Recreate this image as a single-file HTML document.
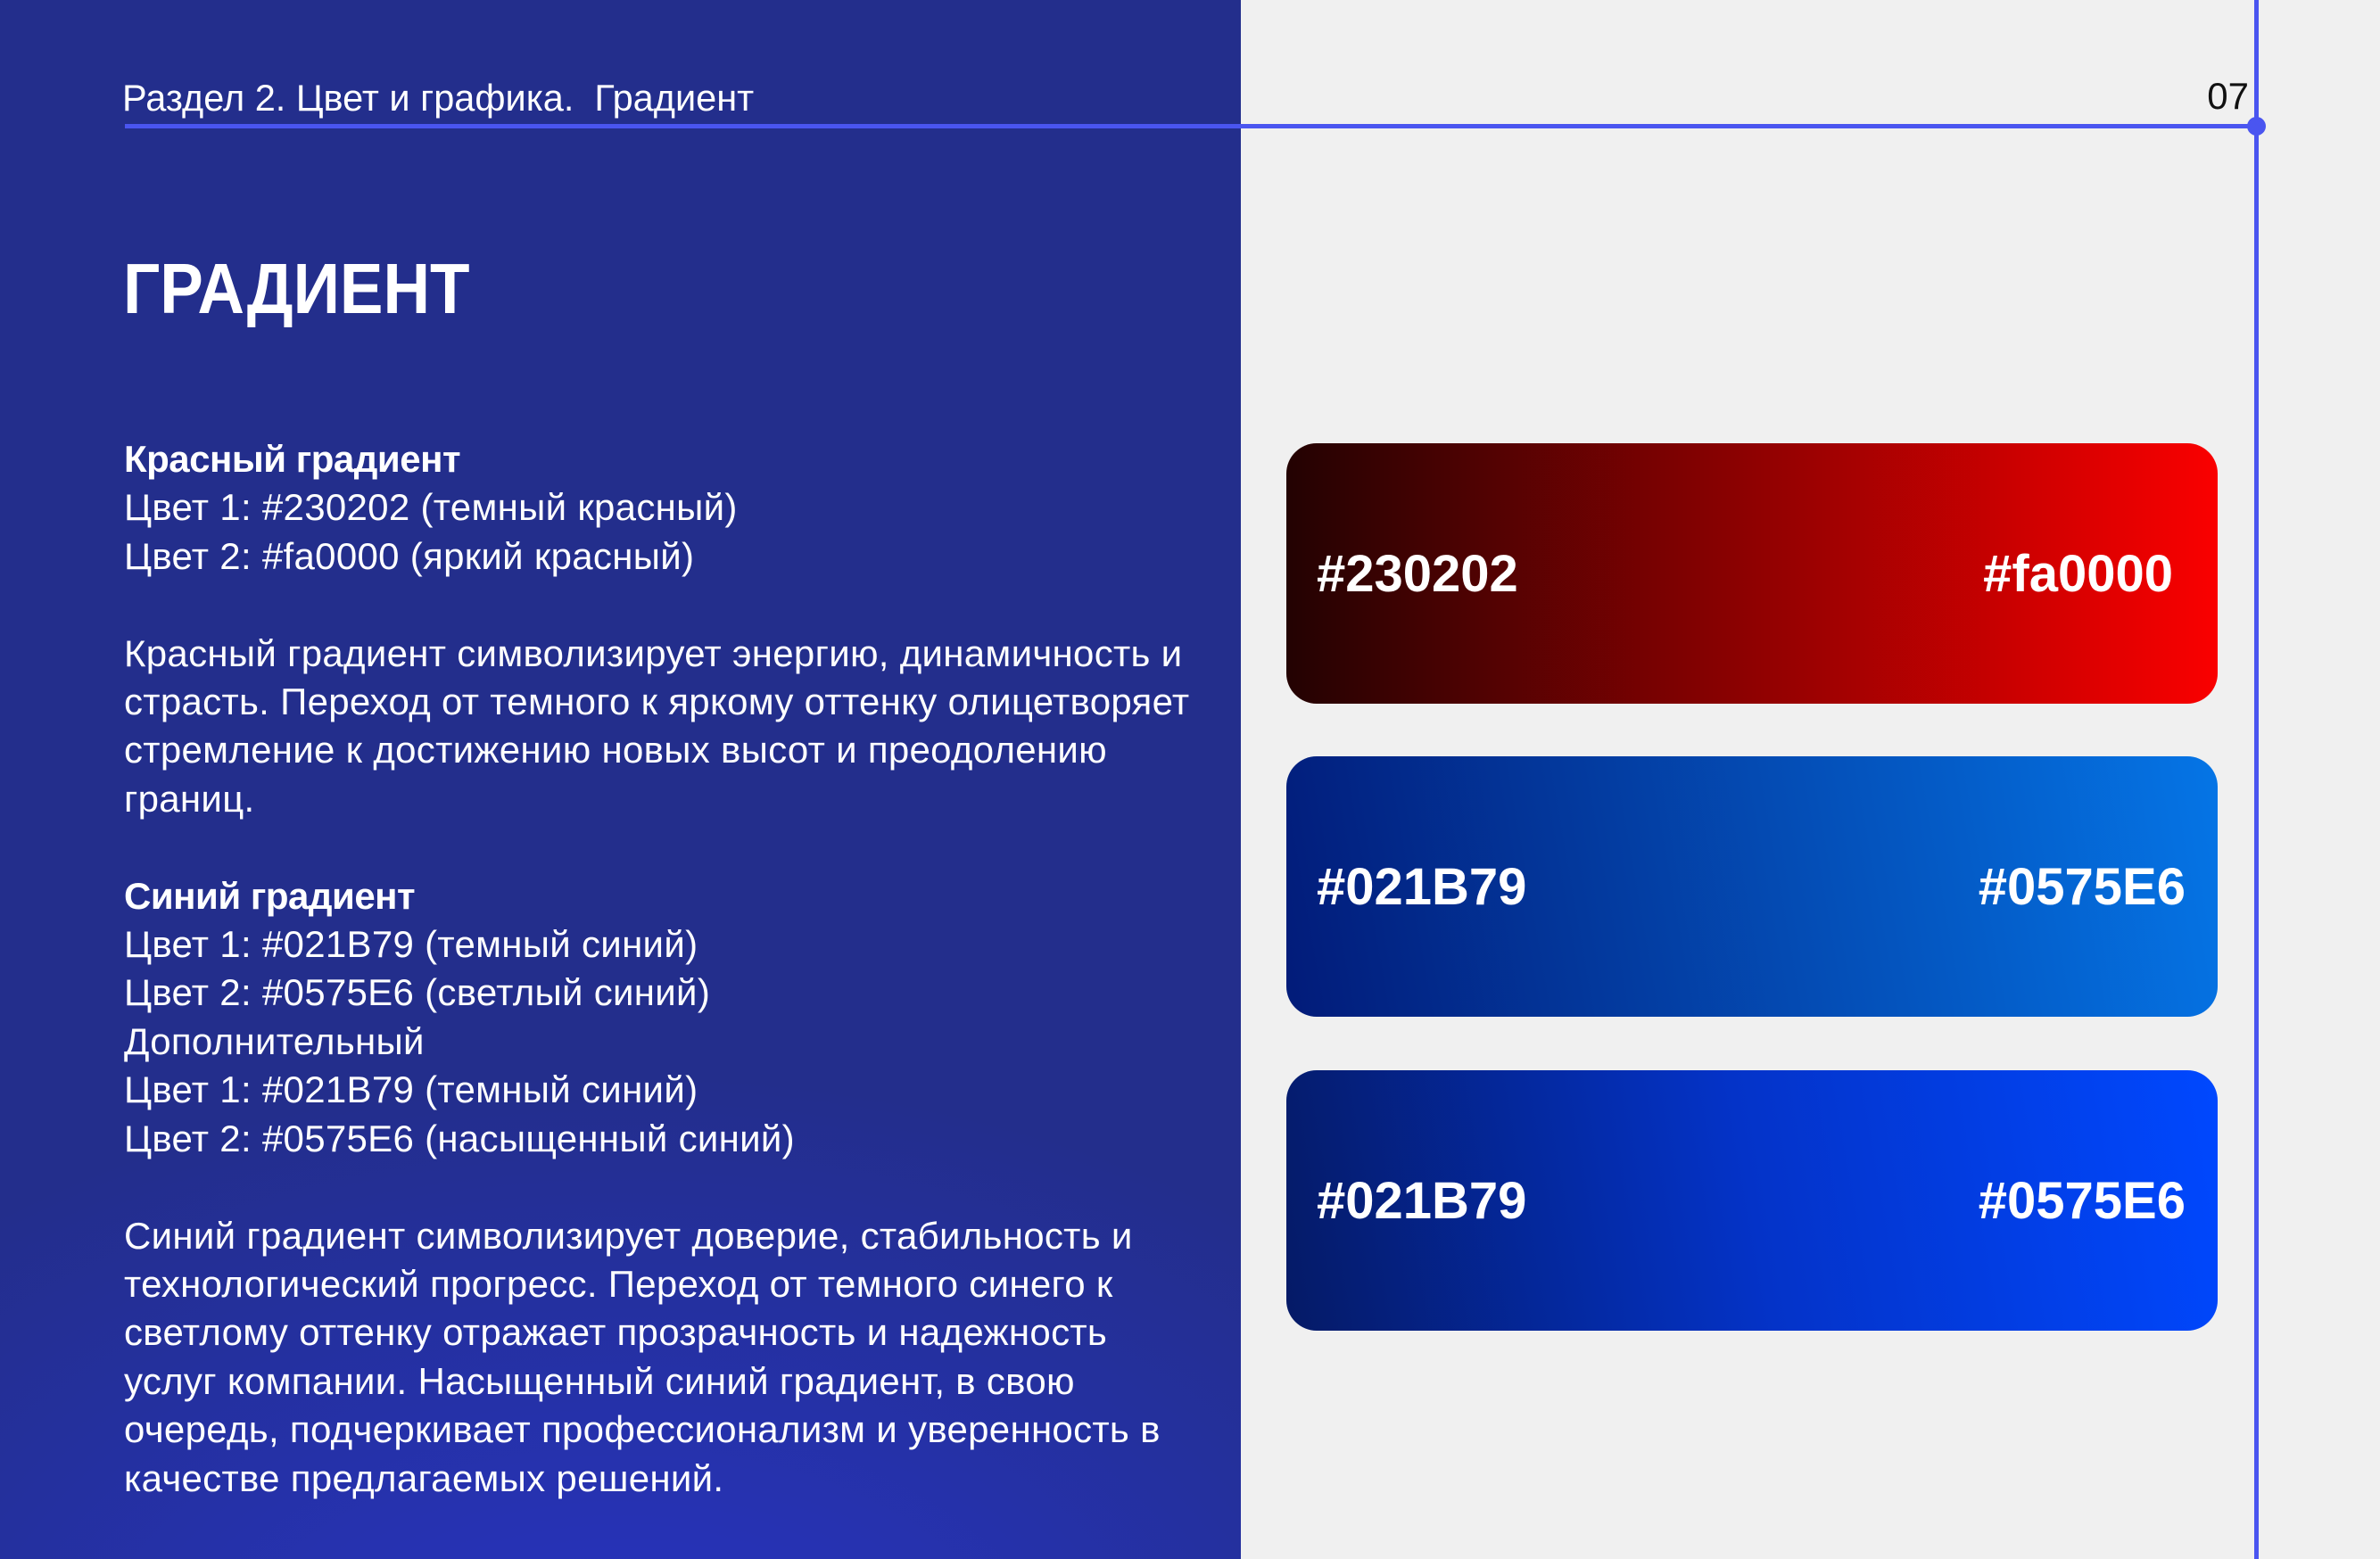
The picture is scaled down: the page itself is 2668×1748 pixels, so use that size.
<!DOCTYPE html>
<html><head><meta charset="utf-8"><style>
*{margin:0;padding:0;box-sizing:border-box}
body{width:2668px;height:1748px;position:relative;overflow:hidden;background:#f0f0f0;font-family:"Liberation Sans",sans-serif}
#left{position:absolute;left:0;top:0;width:1391px;height:1748px;background:radial-gradient(ellipse 1400px 900px at 50% 110%,#2834c4 0%,#2531a8 40%,#232e8c 80%)}
.t{position:absolute;white-space:nowrap;color:#fff}
#hdr{left:137px;top:86px;font-size:41.5px}
#num{right:147px;top:84px;font-size:42px;color:#111}
#hl{position:absolute;left:140px;top:139px;width:2390px;height:5px;background:#4a55f0}
#vl{position:absolute;left:2527px;top:0;width:5px;height:1748px;background:#4a55f0}
#dot{position:absolute;left:2519px;top:131px;width:21px;height:21px;border-radius:50%;background:#4a55f0}
#title{left:138px;top:278px;font-size:80px;font-weight:bold;transform:scaleX(0.91);transform-origin:left top}
#body{left:139px;top:488px;font-size:42px;line-height:54.4px;letter-spacing:0.3px}
#body b{font-weight:bold;letter-spacing:-0.5px}
.card{position:absolute;left:1442px;width:1044px;height:292px;border-radius:34px;color:#fff;font-weight:bold;font-size:58px}
.card span{position:absolute;top:112px;line-height:70px}
.card .l{left:34px}.card .r{right:36px}
</style></head><body>
<div id="left"></div>
<div id="vl"></div><div id="hl"></div><div id="dot"></div>
<div class="t" id="hdr">Раздел 2. Цвет и графика.&nbsp; Градиент</div>
<div class="t" id="num">07</div>
<div class="t" id="title">ГРАДИЕНТ</div>
<div class="t" id="body"><b>Красный градиент</b><br>Цвет 1: #230202 (темный красный)<br>Цвет 2: #fa0000 (яркий красный)<br><br>Красный градиент символизирует энергию, динамичность и<br>страсть. Переход от темного к яркому оттенку олицетворяет<br>стремление к достижению новых высот и преодолению<br>границ.<br><br><b>Синий градиент</b><br>Цвет 1: #021B79 (темный синий)<br>Цвет 2: #0575E6 (светлый синий)<br>Дополнительный<br>Цвет 1: #021B79 (темный синий)<br>Цвет 2: #0575E6 (насыщенный синий)<br><br>Синий градиент символизирует доверие, стабильность и<br>технологический прогресс. Переход от темного синего к<br>светлому оттенку отражает прозрачность и надежность<br>услуг компании. Насыщенный синий градиент, в свою<br>очередь, подчеркивает профессионализм и уверенность в<br>качестве предлагаемых решений.</div>
<div class="card" style="top:497px;background:linear-gradient(90deg,#230202,#fa0000)"><span class="l">#230202</span><span class="r" style="right:50px">#fa0000</span></div>
<div class="card" style="top:848px;background:linear-gradient(80deg,#021B79,#0575E6)"><span class="l">#021B79</span><span class="r">#0575E6</span></div>
<div class="card" style="top:1200px;background:linear-gradient(80deg,#051a66,#0433c8 50%,#0048ff)"><span class="l">#021B79</span><span class="r">#0575E6</span></div>
</body></html>
